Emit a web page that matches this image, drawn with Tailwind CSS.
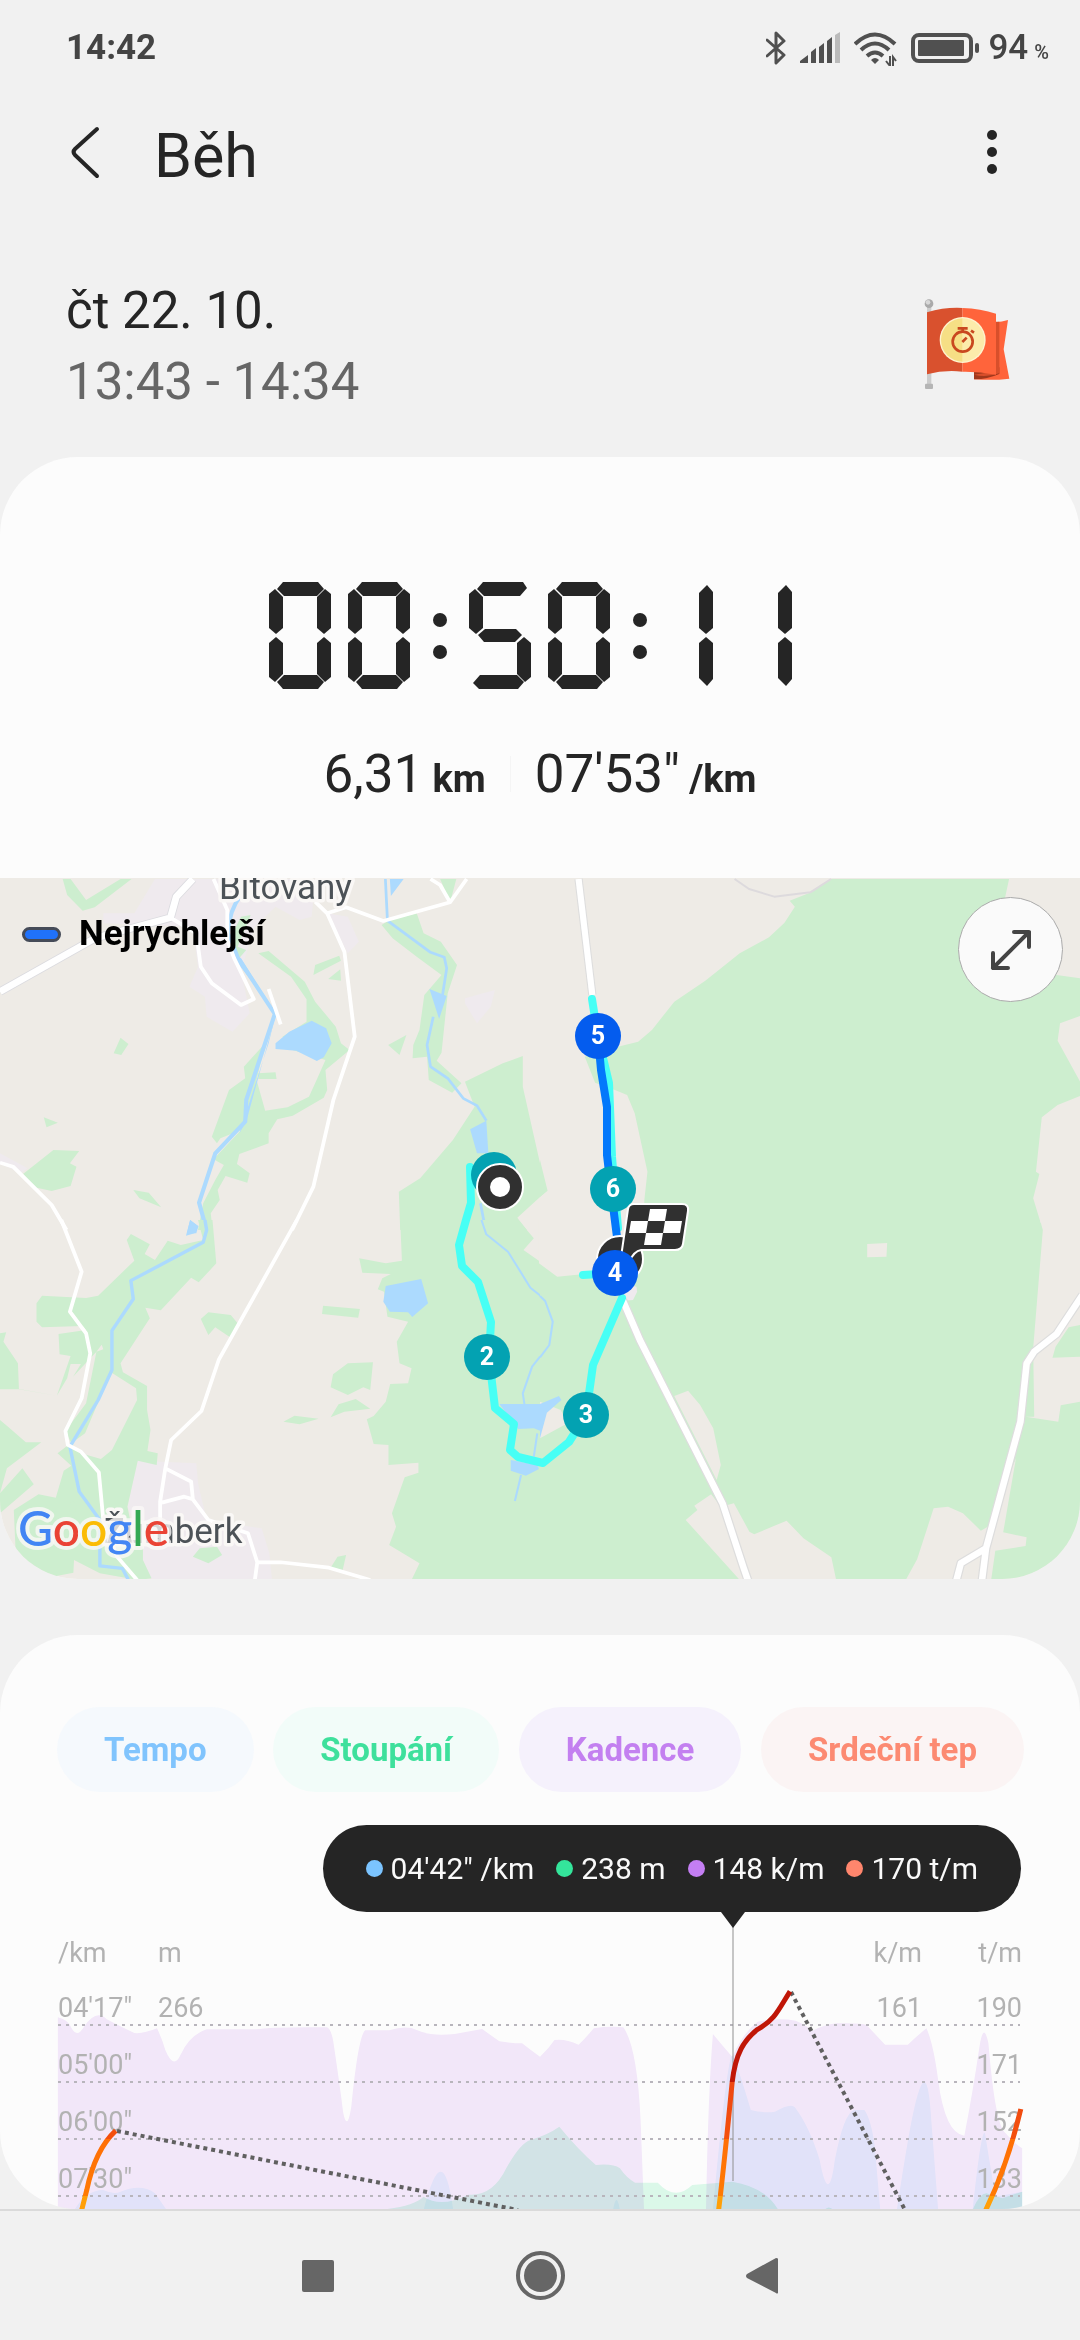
<!DOCTYPE html>
<html lang="cs">
<head>
  <meta charset="UTF-8">
  <meta name="viewport" content="width=device-width, initial-scale=1.0">
  <title>Běh</title>
  <script src="https://cdn.jsdelivr.net/npm/@tailwindcss/browser@4"></script>
</head>
<body class="min-h-screen flex flex-col bg-[#f1f1f1] text-[#252525] font-['Roboto',sans-serif]">

  <!-- Status bar -->
  <div class="flex items-center justify-between h-24 pl-[66px] pr-[31px] text-[#444]">
    <span class="text-[35px] leading-10 font-bold">14:42</span>
    <div class="flex items-center gap-[14px] text-[#505050]">
      <svg class="w-5 h-9" viewBox="0 0 20 36" fill="none" stroke="currentColor" stroke-width="3" stroke-linejoin="round" stroke-linecap="round"><path d="M1 10 18 25 10 33V3l8 8L1 26"/></svg>
      <svg class="w-10 h-9" viewBox="0 0 40 36" fill="currentColor"><path d="M0 33v-2l8-6v8zM11 33V22l5-4v15zM19 33V17l5-4v20zM27 33V11l5-4v26z"/><path d="M35 33V5l5-3v31z" fill="#bbb"/></svg>
      <svg class="w-[43px] h-9" viewBox="0 0 43 36" fill="none" stroke="currentColor" stroke-width="4"><path d="M1 14Q21-5 41 14M7 20q14-13 28 0M13 26q8-7 16 0"/><path d="m21 34-4-4q4-4 8 0z" fill="currentColor" stroke="none"/><path d="M36 26v10m-4-5 4 5M39 37V27l3 4" stroke-width="2"/></svg>
      <svg class="w-[69px] h-9" viewBox="0 0 69 36"><rect x="2" y="5" width="58" height="26" rx="6" fill="none" stroke="currentColor" stroke-width="4"/><rect x="7" y="10" width="46" height="16" rx="1" fill="currentColor"/><rect x="64" y="13" width="4" height="10" rx="2" fill="currentColor"/></svg>
      <div class="flex items-baseline gap-1.5 text-[#444] -ml-1.5">
        <span class="text-[35px] leading-10 font-medium">94</span>
        <span class="text-[20px] font-medium">%</span>
      </div>
    </div>
  </div>

  <!-- Title bar -->
  <header class="flex items-center h-28 pl-[66px] pr-[72px]">
    <button type="button" aria-label="Zpět" class="w-[88px] h-16">
      <svg class="w-10 h-16" viewBox="0 0 40 64" fill="none" stroke="#252525" stroke-width="4" stroke-linecap="round" stroke-linejoin="round"><path d="M31 9 9 29q-3 3 0 6l22 21"/></svg>
    </button>
    <h1 class="flex-1 pt-2 text-[61px] leading-[72px]">Běh</h1>
    <button type="button" aria-label="Další možnosti" class="w-8 h-16 flex flex-col items-center justify-center gap-[7px]">
      <span class="size-[10px] rounded-full bg-[#252525]"></span>
      <span class="size-[10px] rounded-full bg-[#252525]"></span>
      <span class="size-[10px] rounded-full bg-[#252525]"></span>
    </button>
  </header>

  <section class="flex items-center justify-between pl-[66px] pr-[60px] pt-[67px] pb-10">
    <div class="text-[51px] leading-[71px]">
      <p>čt 22. 10.</p>
      <p class="text-[#666]">13:43 - 14:34</p>
    </div>
    <svg class="size-[110px]" viewBox="0 0 330 330" role="img" aria-label="Cíl času">
      <rect x="51" y="45" width="13" height="240" fill="#ccc"/>
      <circle cx="57" cy="38" r="13" fill="#aaa"/><circle cx="54" cy="34" r="7" fill="#d8d8d8"/>
      <rect x="45" y="278" width="24" height="16" rx="3" fill="#b5b5b5"/>
      <path d="M256 94q20-1 38-7l-13 88 17 88q-50 6-106 2v-25z" fill="#ff643b"/>
      <path d="M192 243l76-14v20q-40 17-76 16z" fill="#a0381c"/>
      <path d="M258 92h10v155q-40 14-76 4l66-10z" fill="#d84f2b"/>
      <path d="M51 64q55-16 106-13v191q-54-6-106 8z" fill="#d9512e"/>
      <path d="M157 51q55 2 101 17v183q-50-10-101-9z" fill="#ff643b"/>
      <circle cx="158" cy="147" r="69" fill="#fff3cf"/>
      <path d="M158 82a65 65 0 0 0 0 130z" fill="#f6df85"/><path d="M158 82a65 65 0 0 1 0 130z" fill="#fcecab"/>
      <g fill="none" stroke="#c9481f" stroke-width="8"><circle cx="158" cy="152" r="30"/><path d="M143 112h30M158 112v12M183 119l9 6M157 153l13-13"/></g>
    </svg>
  </section>

  <!-- Summary and map -->
  <section class="bg-[#fcfcfc] rounded-[78px] overflow-hidden">
    <div class="pt-[125px] pb-[70px] flex flex-col items-center">
      <svg class="w-[542px] h-[107px]" viewBox="0 0 542 107" fill="#252525" role="img" aria-label="00:50:11">
        <defs>
          <polygon id="h" points="8,7 14,0 49,0 55,7 48,14 15,14"/>
          <polygon id="m" points="9,53 16,47 47,47 53,53 46,60 15,60"/>
          <polygon id="v" points="6,7 0,12 0,46 7,52 14,46 14,15"/>
          <polygon id="w" points="8,3 0,11 0,46 7,52 14,46 14,10"/>
          <g id="zero">
            <use href="#h"/><use href="#v"/><use href="#v" transform="translate(62 0) scale(-1 1)"/>
            <g transform="translate(0 107) scale(1 -1)"><use href="#h"/><use href="#v"/><use href="#v" transform="translate(62 0) scale(-1 1)"/></g>
          </g>
          <g id="one"><use href="#w" x="48"/><use href="#w" transform="translate(48 107) scale(1 -1)"/></g>
          <g id="dots"><circle cy="38" r="7"/><circle cy="70" r="7"/></g>
        </defs>
        <use href="#zero"/><use href="#zero" x="79"/><use href="#dots" x="171"/>
        <g transform="translate(200 0)">
          <polygon points="8,7 14,0 54,0 58,6 51,14 15,14"/><use href="#v"/><use href="#m"/>
          <use href="#v" transform="translate(62 107) scale(-1 -1)"/><polygon points="4,101 11,93 48,93 55,100 49,107 10,107"/>
        </g>
        <use href="#zero" x="279"/><use href="#dots" x="371"/><use href="#one" x="382"/><use href="#one" x="461"/>
      </svg>
      <div class="mt-[51px] flex items-center gap-6">
        <p class="text-[53px] leading-[68px]">6,31 <span class="text-[38px] leading-none font-bold -ml-1">km</span></p>
        <span class="w-px h-9 bg-[#f5f5f5]"></span>
        <p class="text-[53px] leading-[68px]">07'53" <span class="text-[38px] leading-none font-bold -ml-1">/km</span></p>
      </div>
    </div>

    <div class="relative">
      <svg class="block w-full h-auto" viewBox="0 0 1080 701" fill="none" stroke-linejoin="round">
        <rect width="1080" height="701" fill="#eeebe6"/>

        <!-- land, north-west -->
        <g transform="translate(0 -8) scale(.3444 .3333)">
          <g fill="#efeaee">
            <path d="M450 27H915L905 140 870 150 800 110 740 170 700 300 725 430 675 485 600 440 595 380 550 350 575 290 560 170 300 160V130L390 130zM950 130 1010 140 1042 215 1010 250zM1350 385 1437 360 1425 410 1385 460 1350 400zM0 850 80 895 60 910 0 880z"/>
          </g>
          <g fill="#cdeecf">
            <path d="M182 27H205L250 90 350 27H382L275 112 240 122 195 75zM750 250 780 243 885 335 915 395 975 470 990 520 1015 540 945 600 950 660 940 683 850 737 805 748 780 790V820L695 852 688 882 725 910 718 938 655 918 632 960 638 990 612 1030 617 1080H575L590 1000 625 930 650 885 620 868 700 780 640 805 630 820 615 800 665 660 712 625 708 590 770 520 745 630 770 722 835 712 897 680 915 640 945 570 850 540 820 500 890 455V388L845 320zM750 610 800 607 803 627H750zM910 315 915 285 985 257 990 272zM953 327 988 298 990 332zM350 503 373 522 352 555 330 550zM127 742 168 758 135 772zM67 912 155 840 230 843 203 880 222 890 205 948 150 963 100 952zM387 960 432 968 468 1012 405 985zM700 140 728 135 690 230 715 240 690 270 670 200zM1278 27H1325L1307 97zM1108 165 1130 150 1210 130 1230 190 1280 215 1327 285 1300 370 1282 548 1268 572 1340 640 1313 668 1245 630 1240 560 1198 565 1200 525 1218 480 1232 375 1282 315 1210 260 1140 205zM1127 525 1180 495 1160 555z"/>
            <path d="M1518 558 1460 580 1350 635 1378 710 1315 810 1220 925 1158 965 1162 1080H1530L1502 1043 1588 962 1568 880 1518 650z"/>
          </g>
          <g fill="#acdafe"><path d="M800 520 840 485 905 452 947 475 963 520 940 562 920 573 860 542 800 537zM1132 27H1172L1135 78zM1247 357 1297 378 1275 447zM1365 778 1412 752 1418 850 1385 850zM552 1050 576 1068 570 1090H543zM800 430 700 265H680zM695 790 715 755 800 435 780 520z"/></g>
          <g stroke="#acdafe" stroke-width="9"><path d="M700 75Q665 120 662 190L690 262 798 432 715 690 712 755 625 850 578 998 600 1080" stroke-width="12"/><path d="M1119 27 1125 152 1250 247 1290 262 1297 295 1285 375M1258 440 1240 525 1250 590 1300 625 1345 685 1385 707 1412 752M1395 1000 1410 1080" stroke-width="8"/></g>
          <path d="M0 365 275 205 495 143 512 80 560 27" stroke="#dcdce0" stroke-width="25"/>
          <g stroke="#fff" stroke-width="11">
            <path d="M0 365 275 205 495 143 512 80 560 27" stroke-width="20"/>
            <path d="M495 143 570 190 583 290 615 340 700 405 737 387 680 265 660 210 660 120 620 27M780 357 815 463M915 95 950 130 1000 245 1030 500 968 690 910 950 848 1080M950 130 1005 112 1113 153 1307 97 1355 27M1250 27 1278 45 1307 97M0 878 38 890 150 1005 193 1080"/>
          </g>
        </g>

        <!-- north-east -->
        <g transform="translate(540 -8) scale(.3444 .3333)">
          <path fill="#cdeecf" d="M845 27 780 70 725 92 740 110 710 158 665 202 580 250 480 332 390 395 325 480 285 515 235 528 130 560 160 638 205 655 253 675 275 730 312 905 303 990 300 1110H1460V1080L1432 985 1450 912 1440 905 1457 742 1503 705 1568 678V635L1503 512 1510 460 1568 438V325L1500 315 1340 200 1350 85 1362 27zM0 870 22 962 0 980z"/>
          <path d="M565 27 607 57 680 80 785 67 845 27" stroke="#dddadd" stroke-width="6"/>
          <path d="M112 27 152 375" stroke="#dddddd" stroke-width="24"/>
          <path d="M112 27 152 375" stroke="#fff" stroke-width="18"/>
        </g>

        <!-- south-west -->
        <g transform="translate(0 342) scale(.3444 .3333)">
          <path fill="#efeaee" d="M400 722 570 730 575 790 600 900 760 925 782 1000 790 1080H440L415 1020V960L370 860z"/>
          <g fill="#cdeecf">
            <path d="M1162 0H1505L1550 55 1520 90 1575 130V1080H1195L1218 1030 1130 975 1150 920 1138 880 1175 772 1215 758V728L1128 735V675L1085 672 1065 598 1085 588 1120 545 1133 492 1185 490 1195 445 1160 430 1152 365 1185 305 1125 290 1115 215 1097 208 1110 175 1135 162 1052 158 1043 115 1120 130 1167 122z"/>
            <path d="M575 0H617L628 130 577 187 555 173 467 271 422 263 435 295 350 430 357 457 427 498V570L437 630 428 693 458 700 455 735 400 722 370 860 390 960 415 960V1020L440 1075 400 1080 290 1060 215 1020 213 1058 130 1075H70L0 950 45 985 40 870 112 823 162 833 185 752 207 737 167 700 205 670 235 700 293 717 325 690 398 540 395 505 322 457 247 640 207 670 190 633 250 550 280 395 300 388 287 350 290 298 330 250 383 180 435 190 415 220 418 262 385 250 280 395 212 470 235 432H205L195 475 165 527 55 507 52 430 10 365 18 337 0 340V600L25 622 75 667H120L20 745 0 820 65 745 98 793 0 880V600 508H55L165 527 205 408 173 403 170 342 250 330 240 318 122 322 106 305V250L122 227 250 234 285 227 390 122 368 60 380 42 435 73 420 102 450 120 487 62 525 75 590 60z"/>
            <path d="M583 297 605 277 670 285 690 310 668 352 625 322 605 345zM938 257 1045 267 1040 293 935 282zM967 463 1010 430 1083 427 1075 510 1055 502 1010 525 960 502zM960 592 983 553 1033 537 1075 566 1000 575zM823 605 855 587 925 596 870 613zM560 1010 580 985 630 980 645 1005 605 1030zM960 1043 980 1010 1005 1005 995 1050zM205 840 222 850 215 910 200 900z"/>
          </g>
          <g fill="#acdafe"><path d="M1120 198 1223 177 1243 250 1197 291 1185 277 1132 275 1113 245zM1450 552 1575 552V635L1550 625 1505 627zM1483 720 1560 735 1565 747 1527 767 1483 752zM552 0 576 20 565 40 540 47z"/></g>
          <g stroke="#acdafe" stroke-width="10"><path d="M595 0 600 30 590 67 380 182 387 237 325 332V450L285 540 203 680 230 815 290 900V1038L355 1045 373 1080"/><path d="M1398 0 1412 43 1475 95 1540 203 1585 240M1568 410 1545 440 1518 520 1523 555M1560 640 1550 710M1513 765 1495 843" stroke-width="6"/></g>
          <g stroke="#fff" stroke-width="11"><path d="M178 0 237 155 203 275 250 340 262 400 237 535 190 633 197 675 235 695 287 757 300 900 340 1010 398 1080M862 0 635 420 585 573 497 660 480 745 465 845V900M480 745 555 785 560 838 605 900 720 940 747 1027 740 1080M470 848 535 830 560 838M747 1027H815L955 1043 1075 1080"/></g>
        </g>

        <!-- south-east -->
        <g transform="translate(540 342) scale(.3444 .3333)">
          <path fill="#cdeecf" d="M0 10H1568V1080H0z"/>
          <g fill="#eeebe6"><path d="M-3 0V130L50 170 150 160 300 90 305 0zM1452 0 1460 30 1432 385 1435 590 1410 590 1505 605 1512 556 1568 545V410L1488 413 1497 380 1535 322 1568 315V0zM950 72 1008 69 1006 110 950 112zM390 528 430 512 465 555 503 625 525 735 513 780zM423 900 457 870 448 857 497 823 525 860 563 850 608 935 622 943 716 902 765 955 846 1012 860 1080H580zM1062 1080 1095 1018 1143 865 1185 860 1228 880 1280 932 1300 920 1382 715 1345 937 1413 952 1410 978 1322 992 1310 1080zM0 545 60 570 80 610 0 655z"/></g>
          <path fill="#efeaee" d="M245 190 280 200 282 215 270 240 245 242z"/>
          <path fill="#cdeecf" d="M305 0H250V90L305 140z"/>
          <path fill="#acdafe" d="M0 552 55 528 62 540 20 578 0 655z"/>
          <path d="M0 228 15 243 37 305 27 375 0 412" stroke="#acdafe" stroke-width="6"/>
          <g stroke="#ddd" stroke-width="26"><path d="M1575 225 1500 342 1435 395 1413 430 1395 605 1295 985 1222 1030 1208 1085M1295 985 1283 1085M240 240 290 360 530 850 590 1040 605 1085"/></g>
          <g stroke="#fff" stroke-width="19"><path d="M1575 225 1500 342 1435 395 1413 430 1395 605 1295 985 1222 1030 1208 1085M1295 985 1283 1085M240 240 290 360 530 850 590 1040 605 1085"/></g>
        </g>

        <!-- place names -->
        <g font-size="35" fill="#4c5257" stroke="#faf8f6" stroke-width="7" paint-order="stroke">
          <text x="219" y="21">Bítovany</text>
          <text x="104" y="665">Žumberk</text>
        </g>
        <text x="18" y="668" font-family="Lato" font-size="48" font-weight="500" stroke="#faf8f6" stroke-width="8" stroke-opacity=".8" paint-order="stroke"><tspan fill="#4285f4">G</tspan><tspan fill="#ea4335">o</tspan><tspan fill="#fbbc05">o</tspan><tspan fill="#4285f4">g</tspan><tspan fill="#34a853">l</tspan><tspan fill="#ea4335">e</tspan></text>

        <!-- route -->
        <g stroke-width="8" stroke-linecap="round">
          <path stroke="#47fff5" d="M470 289 471 325 466 342 459 367 462 388 478 404 491 444 489 479 495 530 514 546 510 572 518 579 543 585 569 564 586 537 593 487 622 420M592 121 598 159 609 205 612 279 618 350M583 397 615 395"/>
          <path stroke="#0378fb" d="M598 159 601 192 607 229V277L612 320 617 359"/>
        </g>

        <!-- markers -->
        <circle cx="494" cy="297" r="23" fill="#03a2b2"/>
        <circle cx="500" cy="309" r="23" fill="#303030" stroke="#fff" stroke-width="2"/><circle cx="500" cy="309" r="10" fill="#fff"/>
        <circle cx="613" cy="311" r="23" fill="#03a2b2"/>
        <circle cx="620" cy="381" r="23" fill="#303030" stroke="#fff" stroke-width="2"/>
        <path d="M634 326H682Q689 326 688 333L683 366Q682 372 675 372H641Q634 373 629 384L621 379 628 331Q629 326 634 326z" fill="#303030" stroke="#fff" stroke-width="2"/>
        <path fill="#fff" d="M650 331h17l-2 12h-17zM631 343h17l-2 12h-17zM665 343h17l-2 12h-17zM646 355h17l-2 12h-17z"/>
        <circle cx="598" cy="158" r="23" fill="#045cee"/>
        <circle cx="615" cy="395" r="23" fill="#045cee"/>
        <circle cx="487" cy="479" r="23" fill="#03a2b2"/>
        <circle cx="586" cy="537" r="23" fill="#03a2b2"/>
        <g fill="#fff" font-size="25" font-weight="700" text-anchor="middle">
          <text x="598" y="166">5</text><text x="613" y="319">6</text><text x="615" y="403">4</text><text x="487" y="487">2</text><text x="586" y="545">3</text>
        </g>
      </svg>
      <div class="absolute left-[22px] top-9 flex items-center gap-[18px]">
        <span class="w-[39px] h-[15px] rounded-full bg-[#2072fb] border-3 border-[#454b58]"></span>
        <span class="text-[35px] leading-10 font-bold text-black">Nejrychlejší</span>
      </div>
      <button type="button" aria-label="Zvětšit mapu" class="absolute right-[17px] top-[19px] size-[105px] rounded-full bg-[#fafafa] border border-[#aaa] flex items-center justify-center">
        <svg class="size-12" viewBox="0 0 48 48" fill="none" stroke="#444" stroke-width="4" stroke-linecap="round" stroke-linejoin="round"><path d="M6 42 42 6M27 6h15v15M21 42H6V27"/></svg>
      </button>
    </div>
  </section>

  <!-- Chart -->
  <section class="mt-14 flex-1 bg-[#fcfcfc] rounded-[78px] overflow-hidden">
    <div class="flex justify-between pl-[57px] pr-14 pt-[72px] text-[33px] leading-[85px] font-bold">
      <button type="button" class="rounded-full px-[47px] bg-[#f5f9fd] text-[#80c4fd]">Tempo</button>
      <button type="button" class="rounded-full px-[47px] bg-[#f2fcf9] text-[#3ee09c]">Stoupání</button>
      <button type="button" class="rounded-full px-[47px] bg-[#f5f1fc] text-[#c380f0]">Kadence</button>
      <button type="button" class="rounded-full px-[47px] bg-[#fbf4f4] text-[#fc8a72]">Srdeční tep</button>
    </div>
    <div class="mt-[33px] flex justify-end pr-[59px]">
      <div class="h-[87px] px-[43px] rounded-full bg-[#252525] text-[#fafafa] text-[30px] leading-10 flex items-center gap-[22px]">
        <span class="flex items-center gap-2"><i class="size-[17px] rounded-full bg-[#7bc4ff]"></i>04'42" /km</span>
        <span class="flex items-center gap-2"><i class="size-[17px] rounded-full bg-[#34e59b]"></i>238 m</span>
        <span class="flex items-center gap-2"><i class="size-[17px] rounded-full bg-[#c47ef3]"></i>148 k/m</span>
        <span class="flex items-center gap-2"><i class="size-[17px] rounded-full bg-[#ff866d]"></i>170 t/m</span>
      </div>
    </div>
    <svg class="block w-full h-auto" viewBox="0 0 1080 297" fill="none">
      <defs>
        <linearGradient id="zones" gradientUnits="userSpaceOnUse" x1="0" y1="0" x2="0" y2="750">
          <stop offset=".488" stop-color="#c01607"/><stop offset=".488" stop-color="#ee4713"/>
          <stop offset=".716" stop-color="#f4500c"/><stop offset=".716" stop-color="#ff6f06"/>
          <stop offset=".945" stop-color="#ff7a04"/><stop offset=".945" stop-color="#ff9f08"/>
        </linearGradient>
      </defs>
      <g transform="translate(0 48) scale(.6888 .3333)">
        <g class="mix-blend-multiply" fill="#f5eafc"><path d="M84 750V172Q100 180 104 205 112 235 122 200 140 145 155 178 180 205 195 219 208 222 228 205 236 240 240 270 252 330 262 285 275 225 300 208H370Q400 200 475 202 482 210 485 260 495 400 498 455 504 520 510 440 520 230 530 211H565Q590 195 605 210 625 230 660 222L700 207Q712 225 725 244 745 250 758 250 770 270 784 290 797 265 805 240 820 235 840 254 850 235 862 205 885 198 905 202 925 260 930 480L935 750zM1025 750Q1028 400 1035 222 1050 260 1063 290 1080 215 1100 185 1130 172 1155 182 1170 195 1180 212 1195 195 1215 190 1250 188 1258 195L1285 254H1318Q1330 230 1345 205 1355 250 1362 360 1372 520 1400 527 1412 400 1422 260 1428 180 1435 250 1445 500 1460 520 1475 555 1484 565V750z"/></g>
        <g class="mix-blend-multiply" fill="#eefaff"><path d="M108 750Q125 690 150 690 165 705 175 695 205 670 225 700L242 750zM615 750Q643 520 658 750zM890 750Q895 690 900 750zM1035 750Q1055 300 1063 285 1070 310 1090 450 1110 460 1125 455 1150 425 1155 445 1175 500 1190 600 1203 745 1212 600 1225 460 1240 450H1255Q1265 480 1270 560L1278 750zM1302 750Q1310 640 1320 520 1345 235 1352 480L1362 750zM1412 750Q1425 500 1430 520L1445 710 1484 695V750z"/></g>
        <g class="mix-blend-multiply" fill="#defbec"><path d="M550 750Q600 740 615 710 640 745 680 704 715 710 735 625 755 550 770 540 795 525 812 500 840 570 865 615 890 610 900 625 910 655 922 668H955Q980 725 1005 675L1063 665Q1110 680 1130 750zM1197 750Q1203 735 1210 750zM1412 750Q1422 700 1432 700L1455 715 1484 695V750z"/></g>
      </g>
      <path d="M58 113H1020M58 170H1020M58 227H1020M58 284H1020" stroke="#b8b5bc" stroke-width="2" stroke-dasharray="3 5"/>
      <path d="M733 0V269" stroke="#909090"/>
      <path d="M721 0H745L733 16z" fill="#252525"/>
      <g fill="#b2b2b2" font-size="27">
        <text x="58" y="50">/km</text><text x="158" y="50">m</text>
        <text x="58" y="105">04'17"</text><text x="158" y="105">266</text>
        <text x="58" y="162">05'00"</text><text x="58" y="219">06'00"</text><text x="58" y="276">07'30"</text>
        <g text-anchor="end">
          <text x="922" y="50">k/m</text><text x="1022" y="50">t/m</text>
          <text x="922" y="105">161</text><text x="1022" y="105">190</text>
          <text x="1022" y="162">171</text><text x="1022" y="219">152</text><text x="1022" y="276">133</text>
        </g>
      </g>
      <path d="M117 219 518 298M791 80 905 298" stroke="#606060" stroke-width="4" stroke-dasharray="4 4"/>
      <g transform="translate(0 48) scale(.6888 .3333)" stroke="url(#zones)">
        <path vector-effect="non-scaling-stroke" stroke-width="5" d="M118 755 126 690Q138 570 168 512M1043 755Q1050 640 1063 366C1068 280 1080 240 1100 208 1125 180 1130 150 1147 94M1430 755Q1462 620 1482 447"/>
      </g>
    </svg>
  </section>

  <!-- System navigation -->
  <nav class="border-t-2 border-[#dadada] bg-[#f1f1f1] h-[131px] flex justify-center">
    <div class="grid grid-cols-3 w-[666px]">
      <button type="button" aria-label="Poslední aplikace" class="flex items-center justify-center"><span class="size-8 rounded-xs bg-[#666]"></span></button>
      <button type="button" aria-label="Domů" class="flex items-center justify-center"><span class="size-[49px] rounded-full border-4 border-[#666] flex items-center justify-center"><span class="size-[33px] rounded-full bg-[#666]"></span></span></button>
      <button type="button" aria-label="Zpět" class="flex items-center justify-center"><svg class="w-8 h-9" viewBox="0 0 32 36" fill="#666"><path d="M32 1V35Q31 36 30 35L1 20Q-1 18 1 16L30 0Q32 0 32 1z"/></svg></button>
    </div>
  </nav>

</body>
</html>
